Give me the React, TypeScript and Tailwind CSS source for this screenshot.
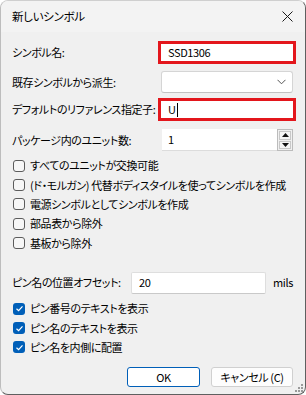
import React from "react";

const font = "[font-family:'Noto_Sans_CJK_JP','Noto_Sans',sans-serif] [font-feature-settings:'palt']";
const txt = "text-[11px] leading-none text-black tracking-[-0.4px] whitespace-nowrap";

function Box({ checked }: { checked?: boolean }) {
  if (checked) {
    return (
      <div className="w-[12px] h-[12px] rounded-[3px] bg-[#005fb8] flex items-center justify-center shrink-0">
        <svg width="9" height="9" viewBox="0 0 9 9">
          <path d="M1.5 4.7 L3.6 6.7 L7.5 2.3" fill="none" stroke="white" strokeWidth="1.2" />
        </svg>
      </div>
    );
  }
  return <div className="w-[12px] h-[12px] rounded-[3px] border border-[#5c5c5c] bg-[#f7f7f7] shrink-0" />;
}

function Check({ label, checked }: { label: string; checked?: boolean }) {
  return (
    <div className="flex items-center h-[19.4px] pl-[12px] gap-[5px]">
      <Box checked={checked} />
      <span className={txt}>{label}</span>
    </div>
  );
}

export default function App() {
  return (
    <div className={`w-[306px] h-[395px] bg-white ${font}`}>
      <div className="w-[306px] h-[395px] bg-[#f0f0f0] rounded-[8px] border border-[#5f5f5f] border-l-[#bdbdbd] border-t-[#cfcfcf] flex flex-col overflow-hidden relative">
        {/* title bar */}
        <div className="h-[31px] bg-[#f3f3f3] flex items-center justify-between pl-[11px] pr-[12px] shrink-0">
          <span className="text-[11.5px] text-black leading-none tracking-[-0.3px]">新しいシンボル</span>
          <svg width="11" height="11" viewBox="0 0 11 11">
            <path d="M0.5 0.5 L10.5 10.5 M10.5 0.5 L0.5 10.5" stroke="#1a1a1a" strokeWidth="1" />
          </svg>
        </div>

        <div className="flex flex-col pt-[9px]">
          {/* row 1 */}
          <div className="flex items-center justify-between h-[23px] pl-[11px] pr-[9px]">
            <span className={txt}>シンボル名:</span>
            <div className="w-[138px] h-[23px] border-[3px] border-[#e3161c] bg-white flex items-center pl-[7px]">
              <span className={txt}>SSD1306</span>
            </div>
          </div>
          {/* row 2 */}
          <div className="flex items-center justify-between h-[22px] mt-[7px] pl-[11px] pr-[12px]">
            <span className={txt}>既存シンボルから派生:</span>
            <div className="w-[132px] h-[22px] border border-[#d5d5d5] border-b-[#c2c2c2] rounded-[3px] bg-white flex items-center justify-end pr-[6px]">
              <svg width="9" height="6" viewBox="0 0 9 6">
                <path d="M0.5 0.8 L4.5 4.8 L8.5 0.8" fill="none" stroke="#555" strokeWidth="1" />
              </svg>
            </div>
          </div>
          {/* row 3 */}
          <div className="flex items-center justify-between h-[23px] mt-[5px] pl-[11px] pr-[9px]">
            <span className={txt}>デフォルトのリファレンス指定子:</span>
            <div className="w-[138px] h-[23px] border-[3px] border-[#e3161c] bg-white flex items-center pl-[7px]">
              <span className={txt}>U</span>
              <div className="w-[1px] h-[14px] bg-black ml-[1px]" />
            </div>
          </div>
          {/* row 4 */}
          <div className="flex items-center justify-between h-[22px] mt-[8px] pl-[11px] pr-[12px]">
            <span className={txt}>パッケージ内のユニット数:</span>
            <div className="w-[131px] h-[22px] flex">
              <div className="flex-1 bg-white flex items-center pl-[6px] border-b border-[#dcdcdc]">
                <span className={txt}>1</span>
              </div>
              <div className="w-[16px] h-[22px] border border-[#bcbcbc] bg-[#f0f0f0] flex flex-col p-[1px] gap-[1px]">
                <div className="flex-1 border border-[#c8c8c8] bg-[#f5f5f5] flex items-center justify-center">
                  <svg width="7" height="4" viewBox="0 0 7 4"><path d="M3.5 0 L7 4 L0 4 Z" fill="#111" /></svg>
                </div>
                <div className="flex-1 border border-[#c8c8c8] bg-[#f5f5f5] flex items-center justify-center">
                  <svg width="7" height="4" viewBox="0 0 7 4"><path d="M0 0 L7 0 L3.5 4 Z" fill="#111" /></svg>
                </div>
              </div>
            </div>
          </div>

          {/* checkboxes */}
          <div className="flex flex-col mt-[5px]">
            <Check label="すべてのユニットが交換可能" />
            <Check label="(ド・モルガン) 代替ボディスタイルを使ってシンボルを作成" />
            <Check label="電源シンボルとしてシンボルを作成" />
            <Check label="部品表から除外" />
            <Check label="基板から除外" />
          </div>

          {/* offset row */}
          <div className="flex items-center h-[22px] mt-[19px] pl-[11px] pr-[12px]">
            <span className={`${txt} w-[119px]`}>ピン名の位置オフセット:</span>
            <div className="w-[135px] h-[22px] bg-white border border-[#dedede] border-b-[#c9c9c9] rounded-[2px] flex items-center pl-[7px]">
              <span className={txt}>20</span>
            </div>
            <span className={`${txt} ml-[7px]`}>mils</span>
          </div>

          <div className="flex flex-col mt-[5px]">
            <Check label="ピン番号のテキストを表示" checked />
            <Check label="ピン名のテキストを表示" checked />
            <Check label="ピン名を内側に配置" checked />
          </div>

          {/* buttons */}
          <div className="flex justify-end gap-[11px] pr-[12px] mt-[10px]">
            <div className="w-[73px] h-[20px] bg-white border border-[#005fb8] rounded-[3px] flex items-center justify-center">
              <span className={txt}>OK</span>
            </div>
            <div className="w-[82px] h-[20px] bg-[#fdfdfd] border border-[#d0d0d0] rounded-[3px] flex items-center justify-center">
              <span className={txt}>キャンセル (C)</span>
            </div>
          </div>
        </div>

        {/* resize grip */}
        <div className="absolute right-[2px] bottom-[2px] grid grid-cols-3 gap-[1px]">
          <span className="w-[2px] h-[2px]" />
          <span className="w-[2px] h-[2px]" />
          <span className="w-[2px] h-[2px] bg-[#9a9a9a]" />
          <span className="w-[2px] h-[2px]" />
          <span className="w-[2px] h-[2px] bg-[#9a9a9a]" />
          <span className="w-[2px] h-[2px] bg-[#9a9a9a]" />
          <span className="w-[2px] h-[2px] bg-[#9a9a9a]" />
          <span className="w-[2px] h-[2px] bg-[#9a9a9a]" />
          <span className="w-[2px] h-[2px] bg-[#9a9a9a]" />
        </div>
      </div>
    </div>
  );
}
